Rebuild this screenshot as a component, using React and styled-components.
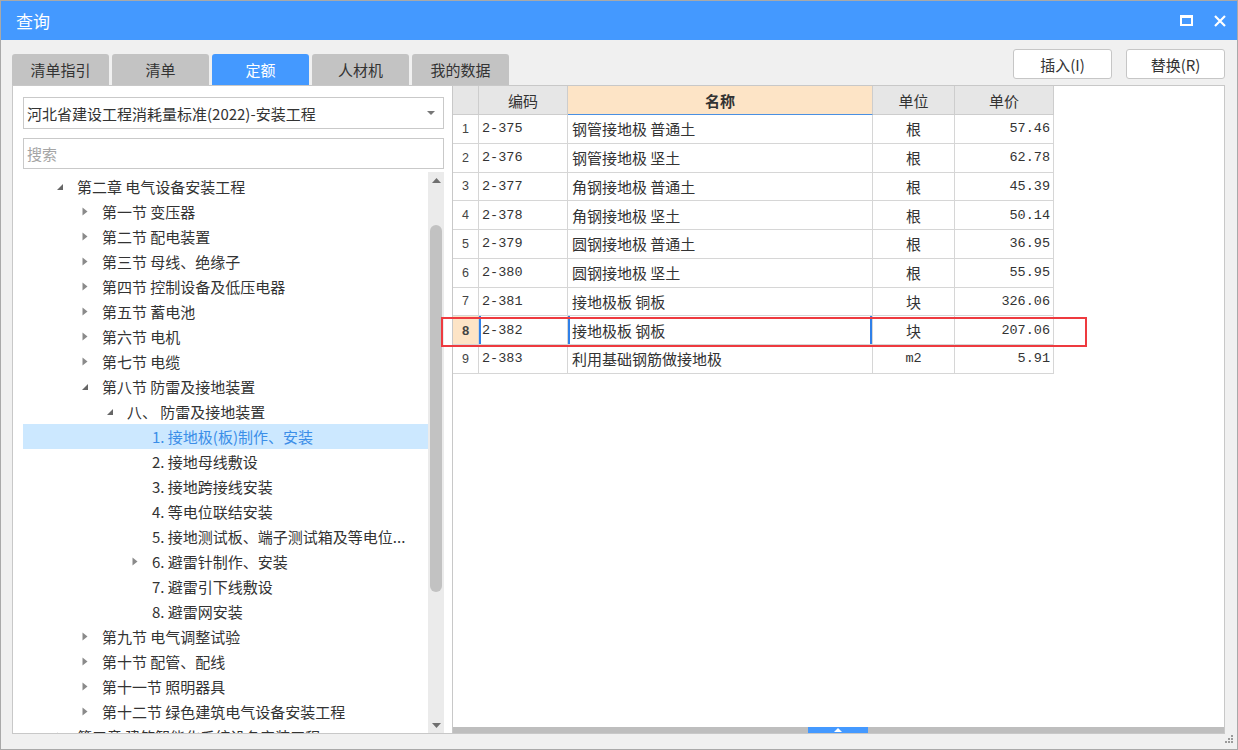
import React from "react";
import styled, { createGlobalStyle } from "styled-components";

const GlobalStyle = createGlobalStyle`
  html, body { margin: 0; padding: 0; background: #fff; }
  body { font-family: "Noto Sans CJK SC", "Noto Sans", sans-serif; color: #333; }
  * { box-sizing: border-box; }
`;

const Window = styled.div`
  position: relative;
  width: 1238px;
  height: 750px;
  border: 1px solid #a9a9a9;
  background: #f0f0f0;
  display: flex;
  flex-direction: column;
  overflow: hidden;
`;

const TitleBar = styled.div`
  height: 39px;
  flex-shrink: 0;
  background: #4499ff;
  color: #fff;
  display: flex;
  align-items: center;
  padding: 0 11px 0 15px;
`;

const Title = styled.div`
  flex: 1;
  font-size: 17px;
`;

const WinButtons = styled.div`
  display: flex;
  align-items: center;
  gap: 21px;
`;

const TopRow = styled.div`
  height: 45px;
  flex-shrink: 0;
  display: flex;
  justify-content: space-between;
  padding: 0 12px 0 11px;
`;

const Tabs = styled.div`
  display: flex;
  align-self: flex-end;
  gap: 3px;
`;

const Tab = styled.div`
  width: 97px;
  height: 31px;
  border-radius: 3px 3px 0 0;
  display: flex;
  align-items: center;
  justify-content: center;
  font-size: 15px;
  background: ${(p) => (p.$active ? "#4499ff" : "#c3c3c3")};
  color: ${(p) => (p.$active ? "#fff" : "#333")};
`;

const Actions = styled.div`
  display: flex;
  gap: 14px;
  margin-top: 9px;
`;

const Button = styled.div`
  width: 99px;
  height: 30px;
  background: #fff;
  border: 1px solid #c6c6c6;
  border-radius: 3px;
  display: flex;
  align-items: center;
  justify-content: center;
  font-size: 15px;
  color: #333;
`;

const Main = styled.div`
  height: 649px;
  flex-shrink: 0;
  display: flex;
  padding: 0 12px 0 11px;
`;

const LeftPanel = styled.div`
  width: 441px;
  background: #fff;
  border: 1px solid #c8c8c8;
  display: flex;
  flex-direction: column;
  padding: 11px 8px 0 10px;
`;

const Select = styled.div`
  height: 32px;
  border: 1px solid #c9c9c9;
  display: flex;
  align-items: center;
  justify-content: space-between;
  padding: 0 8px 0 3px;
  font-size: 15px;
  color: #333;
`;

const Search = styled.div`
  height: 31px;
  margin-top: 9px;
  border: 1px solid #c9c9c9;
  display: flex;
  align-items: center;
  padding-left: 3px;
  font-size: 15px;
  color: #a5a5a5;
`;

const Tree = styled.div`
  flex: 1;
  margin-top: 3px;
  display: flex;
  overflow: hidden;
`;

const TreeList = styled.div`
  flex: 1;
  padding-top: 2px;
  overflow: hidden;
`;

const TreeRow = styled.div`
  height: 25px;
  display: flex;
  align-items: center;
  padding-left: ${(p) => 29 + p.$level * 25}px;
  font-size: 15px;
  white-space: nowrap;
  background: ${(p) => (p.$selected ? "#cce8ff" : "transparent")};
  color: ${(p) => (p.$selected ? "#3b8ee8" : "#333")};
`;

const Toggle = styled.span`
  width: 16px;
  height: 16px;
  margin-right: 9px;
  display: flex;
  align-items: center;
  justify-content: center;
  flex-shrink: 0;
`;

const VScroll = styled.div`
  width: 16px;
  background: #ebebeb;
  display: flex;
  flex-direction: column;
  align-items: center;
`;

const ScrollArrow = styled.div`
  height: 16px;
  width: 16px;
  display: flex;
  align-items: center;
  justify-content: center;
`;

const ScrollTrack = styled.div`
  flex: 1;
  width: 100%;
  display: flex;
  justify-content: center;
`;

const Thumb = styled.div`
  width: 12px;
  height: 367px;
  margin-top: 37px;
  border-radius: 6px;
  background: #c2c2c2;
`;

const RightPanel = styled.div`
  flex: 1;
  background: #fff;
  border: 1px solid #c8c8c8;
  border-left: none;
  display: flex;
  flex-direction: column;
`;

const TableRow = styled.div`
  display: grid;
  grid-template-columns: 26px 89px 305px 82px 99px;
  height: ${(p) => (p.$header ? "29px" : "28.75px")};
`;

const Cell = styled.div`
  display: flex;
  align-items: center;
  justify-content: ${(p) => p.$align || "flex-start"};
  padding: 0 3px;
  border-right: 1px solid #d6d6d6;
  border-bottom: 1px solid #d6d6d6;
  font-size: 15px;
  color: #333;
  white-space: nowrap;
`;

const HeadCell = styled(Cell)`
  justify-content: center;
  background: ${(p) => (p.$active ? "#fde4c6" : "#e6e6e6")};
  border-color: #cdcdcd;
  font-weight: ${(p) => (p.$active ? 700 : 400)};
  border-bottom: 1px solid ${(p) => (p.$active ? "#4a90e2" : "#cdcdcd")};
`;

const NumCell = styled(Cell)`
  justify-content: center;
  font-family: "Liberation Sans", sans-serif;
  font-size: ${(p) => (p.$current ? "13px" : "12.5px")};
  font-weight: ${(p) => (p.$current ? 700 : 400)};
  background: ${(p) => (p.$current ? "#fde4c6" : "#fff")};
  color: #444;
`;

const MonoCell = styled(Cell)`
  font-family: "Liberation Mono", monospace;
  font-size: 13.5px;
  box-shadow: ${(p) => (p.$focus ? "inset 2px 0 0 #2f80e8" : "none")};
`;

const NameCell = styled(Cell)`
  padding-left: 4px;
  box-shadow: ${(p) =>
    p.$focus ? "inset 2px 0 0 #2f80e8, inset -2px 0 0 #2f80e8" : "none"};
`;

const UnitCell = styled(Cell)`
  justify-content: center;
  font-family: ${(p) =>
    p.$mono ? '"Liberation Mono", monospace' : '"Noto Sans CJK SC", sans-serif'};
  font-size: ${(p) => (p.$mono ? "13.5px" : "15px")};
`;

const Spacer = styled.div`
  flex: 1;
`;

const HScroll = styled.div`
  height: 6px;
  background: #bebebe;
  display: flex;
  padding-left: 355px;
`;

const Handle = styled.div`
  width: 60px;
  height: 6px;
  background: #4499ff;
  display: flex;
  align-items: center;
  justify-content: center;
`;

const Footer = styled.div`
  flex: 1;
  display: flex;
  justify-content: flex-end;
  align-items: flex-end;
  padding: 0 3px 5px 0;
`;

const Highlight = styled.div`
  position: absolute;
  left: 440px;
  top: 316px;
  width: 646px;
  height: 30px;
  border: 2px solid #ee3a3f;
  pointer-events: none;
`;

const Expanded = () => (
  <svg width="8" height="8" viewBox="0 0 8 8">
    <path d="M7 1 L7 7 L1 7 Z" fill="#666" />
  </svg>
);

const Collapsed = () => (
  <svg width="6" height="9" viewBox="0 0 6 9">
    <path d="M0.5 0.5 L5.5 4.5 L0.5 8.5 Z" fill="#8a8a8a" />
  </svg>
);

const Tri = ({ up, w = 9, h = 5, color = "#6f6f6f" }) => (
  <svg width={w} height={h} viewBox={`0 0 ${w} ${h}`}>
    <path d={up ? `M0 ${h} L${w / 2} 0 L${w} ${h} Z` : `M0 0 L${w} 0 L${w / 2} ${h} Z`} fill={color} />
  </svg>
);

const tabs = ["清单指引", "清单", "定额", "人材机", "我的数据"];

const tree = [
  { l: 0, t: "第二章 电气设备安装工程", s: "open" },
  { l: 1, t: "第一节 变压器", s: "closed" },
  { l: 1, t: "第二节 配电装置", s: "closed" },
  { l: 1, t: "第三节 母线、绝缘子", s: "closed" },
  { l: 1, t: "第四节 控制设备及低压电器", s: "closed" },
  { l: 1, t: "第五节 蓄电池", s: "closed" },
  { l: 1, t: "第六节 电机", s: "closed" },
  { l: 1, t: "第七节 电缆", s: "closed" },
  { l: 1, t: "第八节 防雷及接地装置", s: "open" },
  { l: 2, t: "八、 防雷及接地装置", s: "open" },
  { l: 3, t: "1. 接地极(板)制作、安装", sel: true },
  { l: 3, t: "2. 接地母线敷设" },
  { l: 3, t: "3. 接地跨接线安装" },
  { l: 3, t: "4. 等电位联结安装" },
  { l: 3, t: "5. 接地测试板、端子测试箱及等电位..." },
  { l: 3, t: "6. 避雷针制作、安装", s: "closed" },
  { l: 3, t: "7. 避雷引下线敷设" },
  { l: 3, t: "8. 避雷网安装" },
  { l: 1, t: "第九节 电气调整试验", s: "closed" },
  { l: 1, t: "第十节 配管、配线", s: "closed" },
  { l: 1, t: "第十一节 照明器具", s: "closed" },
  { l: 1, t: "第十二节 绿色建筑电气设备安装工程", s: "closed" },
  { l: 0, t: "第三章 建筑智能化系统设备安装工程", s: "closed" },
];

const rows = [
  ["2-375", "钢管接地极 普通土", "根", "57.46"],
  ["2-376", "钢管接地极 坚土", "根", "62.78"],
  ["2-377", "角钢接地极 普通土", "根", "45.39"],
  ["2-378", "角钢接地极 坚土", "根", "50.14"],
  ["2-379", "圆钢接地极 普通土", "根", "36.95"],
  ["2-380", "圆钢接地极 坚土", "根", "55.95"],
  ["2-381", "接地极板 铜板", "块", "326.06"],
  ["2-382", "接地极板 钢板", "块", "207.06"],
  ["2-383", "利用基础钢筋做接地极", "m2", "5.91"],
];

export default function App() {
  return (
    <>
      <GlobalStyle />
      <Window>
        <TitleBar>
          <Title>查询</Title>
          <WinButtons>
            <svg width="13" height="11" viewBox="0 0 13 11">
              <rect x="1" y="1.5" width="11" height="8.5" fill="none" stroke="#fff" strokeWidth="2" />
              <rect x="0" y="0" width="13" height="3" fill="#fff" />
            </svg>
            <svg width="12" height="12" viewBox="0 0 12 12">
              <path d="M1 1 L11 11 M11 1 L1 11" stroke="#fff" strokeWidth="2.2" />
            </svg>
          </WinButtons>
        </TitleBar>

        <TopRow>
          <Tabs>
            {tabs.map((t) => (
              <Tab key={t} $active={t === "定额"}>{t}</Tab>
            ))}
          </Tabs>
          <Actions>
            <Button>插入(I)</Button>
            <Button>替换(R)</Button>
          </Actions>
        </TopRow>

        <Main>
          <LeftPanel>
            <Select>
              <span>河北省建设工程消耗量标准(2022)-安装工程</span>
              <Tri w={8} h={4} color="#777" />
            </Select>
            <Search>搜索</Search>
            <Tree>
              <TreeList>
                {tree.map((n, i) => (
                  <TreeRow key={i} $level={n.l} $selected={n.sel}>
                    <Toggle>
                      {n.s === "open" && <Expanded />}
                      {n.s === "closed" && <Collapsed />}
                    </Toggle>
                    {n.t}
                  </TreeRow>
                ))}
              </TreeList>
              <VScroll>
                <ScrollArrow><Tri up /></ScrollArrow>
                <ScrollTrack><Thumb /></ScrollTrack>
                <ScrollArrow><Tri /></ScrollArrow>
              </VScroll>
            </Tree>
          </LeftPanel>

          <RightPanel>
            <TableRow $header>
              <HeadCell />
              <HeadCell>编码</HeadCell>
              <HeadCell $active>名称</HeadCell>
              <HeadCell>单位</HeadCell>
              <HeadCell>单价</HeadCell>
            </TableRow>
            {rows.map((r, i) => {
              const cur = i === 7;
              return (
                <TableRow key={r[0]}>
                  <NumCell $current={cur}>{i + 1}</NumCell>
                  <MonoCell $focus={cur}>{r[0]}</MonoCell>
                  <NameCell $focus={cur}>{r[1]}</NameCell>
                  <UnitCell $mono={r[2] === "m2"}>{r[2]}</UnitCell>
                  <MonoCell $align="flex-end">{r[3]}</MonoCell>
                </TableRow>
              );
            })}
            <Spacer />
            <HScroll>
              <Handle>
                <Tri up w={8} h={4} color="#fff" />
              </Handle>
            </HScroll>
          </RightPanel>
        </Main>

        <Footer>
          <svg width="10" height="10" viewBox="0 0 10 10">
            <g fill="#9a9a9a">
              <rect x="7" y="1" width="2" height="2" />
              <rect x="4" y="4" width="2" height="2" />
              <rect x="7" y="4" width="2" height="2" />
              <rect x="1" y="7" width="2" height="2" />
              <rect x="4" y="7" width="2" height="2" />
              <rect x="7" y="7" width="2" height="2" />
            </g>
          </svg>
        </Footer>

        <Highlight />
      </Window>
    </>
  );
}
